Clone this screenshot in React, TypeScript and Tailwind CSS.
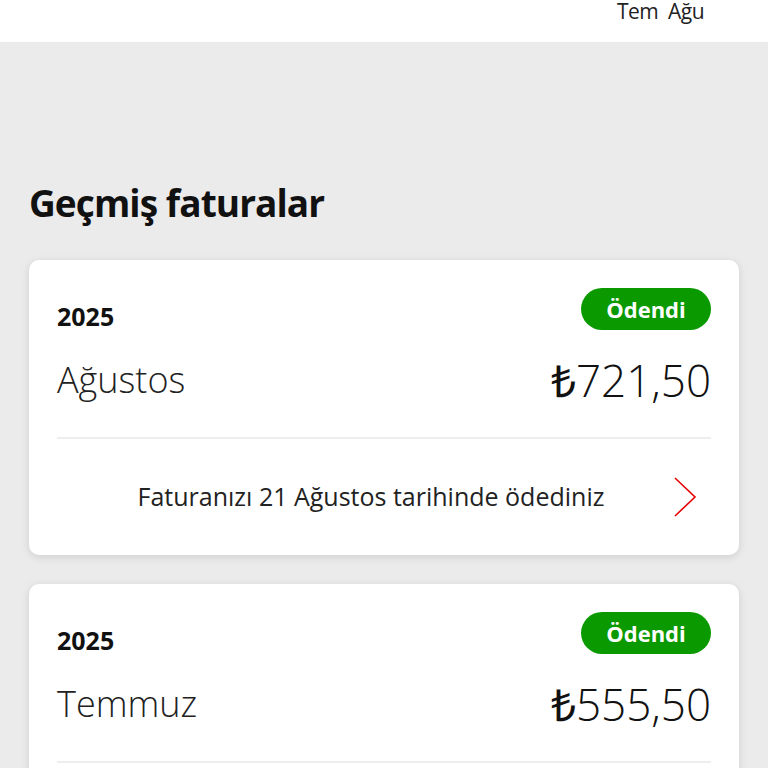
import React from 'react';

interface BillCardProps {
  year: string;
  month: string;
  amount: string;
  note?: string;
}

const Chevron = () => (
  <svg width="24" height="42" viewBox="0 0 24 42" fill="none">
    <path d="M2 2 L22 21 L2 40" stroke="#e60000" strokeWidth="1.6" />
  </svg>
);

const BillCard: React.FC<BillCardProps> = ({ year, month, amount, note }) => {
  return (
    <div className="bg-white rounded-[10px] shadow-[0_2px_8px_rgba(0,0,0,0.12)] px-[28px]">
      <div className="flex items-start justify-between pt-[28px]">
        <span className="text-[25px] font-bold text-[#111] mt-[16px] leading-none">{year}</span>
        <span className="bg-[#0a9a00] text-white text-[22px] font-bold rounded-full h-[42px] w-[130px] flex items-center justify-center leading-none">
          Ödendi
        </span>
      </div>
      <div className="flex items-center justify-between mt-[20px] h-[60px]">
        <span className="text-[36px] font-light text-[#222]">{month}</span>
        <span className="text-[44px] font-light text-[#111]">{amount}</span>
      </div>
      <div className="h-[2px] bg-[#eeeeee] mt-[27px]" />
      {note && (
        <div className="flex items-center h-[116px]">
          <span className="flex-1 text-center text-[25px] text-[#222] pl-[12px]">{note}</span>
          <div className="pr-[14px]">
            <Chevron />
          </div>
        </div>
      )}
    </div>
  );
};

export default function App() {
  return (
    <div className="w-[768px] h-[768px] overflow-hidden bg-[#ebebeb] font-['Open_Sans',sans-serif]">
      <div className="h-[42px] bg-white flex justify-end pr-[64px]">
        <span className="text-[21px] text-[#222] leading-none mt-[1px] tracking-tight">Tem&nbsp; Ağu</span>
      </div>
      <div className="px-[29px]">
        <h1 className="text-[37px] font-bold text-[#111] mt-[142px] leading-none tracking-tight">Geçmiş faturalar</h1>
        <div className="flex flex-col gap-[29px] mt-[39px] w-[710px]">
          <BillCard year="2025" month="Ağustos" amount="₺721,50" note="Faturanızı 21 Ağustos tarihinde ödediniz" />
          <BillCard year="2025" month="Temmuz" amount="₺555,50" note="Faturanızı 21 Temmuz tarihinde ödediniz" />
        </div>
      </div>
    </div>
  );
}
